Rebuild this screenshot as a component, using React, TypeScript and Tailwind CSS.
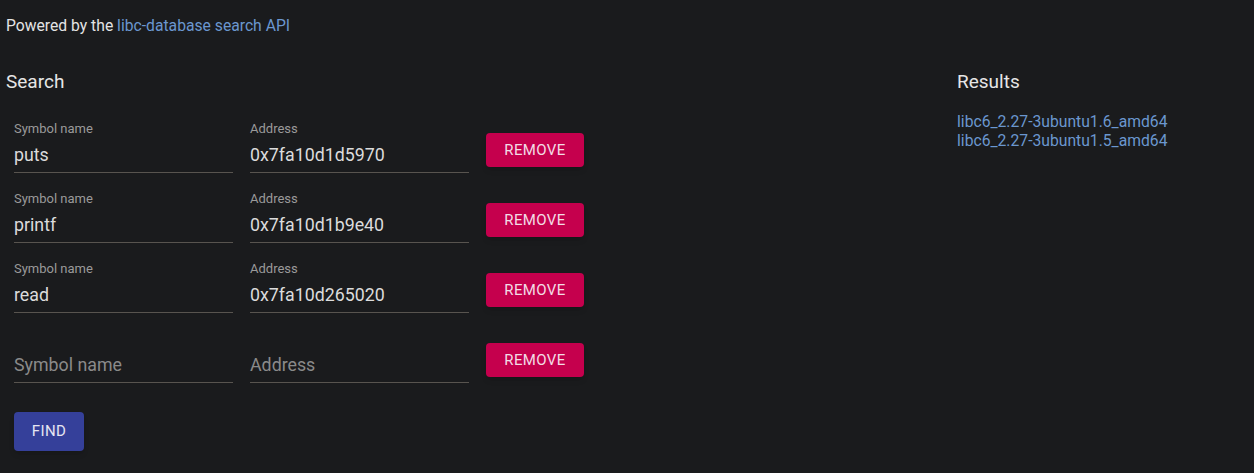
import React from "react";

const rows = [
  { sym: "puts", addr: "0x7fa10d1d5970" },
  { sym: "printf", addr: "0x7fa10d1b9e40" },
  { sym: "read", addr: "0x7fa10d265020" },
  { sym: "", addr: "" },
];

function Field({ label, value, width }: { label: string; value: string; width: string }) {
  const filled = value !== "";
  return (
    <div className={`relative ${width} h-[57px] border-b border-[#58544f]`}>
      {filled ? (
        <>
          <div className="absolute left-0 top-[6px] text-[13px] leading-[14px] text-[#9a9a9a]">{label}</div>
          <div className="absolute left-0 top-[28px] text-[17.8px] leading-[22px] text-[#dcdcdc]">{value}</div>
        </>
      ) : (
        <div className="absolute left-0 top-[28px] text-[17.8px] leading-[22px] text-[#8a8a8a]">{label}</div>
      )}
    </div>
  );
}

export default function App() {
  return (
    <div
      className="w-[1254px] h-[473px] bg-[#1a1b1d] text-[#e4e4e4] overflow-hidden"
      style={{ fontFamily: "Roboto, 'Liberation Sans', sans-serif" }}
    >
      <div className="px-[6px] pt-[16px] text-[15.7px] leading-[20px]">
        Powered by the <span className="text-[#6b97cf]">libc-database search API</span>
      </div>
      <div className="flex">
        <div className="w-[957px]">
          <div className="px-[6px] pt-[35px] text-[19px] leading-[22px] text-[#e6e6e6]">Search</div>
          <div className="pl-[14px] pt-[23px] flex flex-col gap-[13px]">
            {rows.map((r, i) => (
              <div key={i} className="flex items-end">
                <Field label="Symbol name" value={r.sym} width="w-[219px]" />
                <div className="w-[17px]" />
                <Field label="Address" value={r.addr} width="w-[219px]" />
                <button className="ml-[17px] mb-[6px] w-[98px] h-[34px] rounded-[4px] bg-[#c5004d] text-[#f3dce5] text-[15px] tracking-[0.4px] shadow-md">
                  REMOVE
                </button>
              </div>
            ))}
          </div>
          <div className="pl-[14px] pt-[29px]">
            <button className="w-[70px] h-[39px] rounded-[4px] bg-[#35409a] text-[#e6e6f2] text-[15px] tracking-[0.4px] shadow-md">
              FIND
            </button>
          </div>
        </div>
        <div className="pt-[35px]">
          <div className="text-[19px] leading-[22px] text-[#e6e6e6]">Results</div>
          <div className="pt-[19px] text-[15.7px] leading-[19px] text-[#6b97cf]">
            <div>libc6_2.27-3ubuntu1.6_amd64</div>
            <div>libc6_2.27-3ubuntu1.5_amd64</div>
          </div>
        </div>
      </div>
    </div>
  );
}
